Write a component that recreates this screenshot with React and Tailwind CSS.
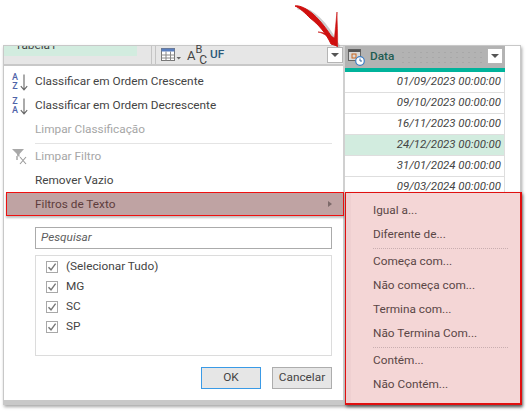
const Item = ({ icon, muted, children }) => (
  <div className={`flex h-[24px] items-center ${muted ? "text-[#a6a6a6]" : "text-[#444444]"}`}>
    <div className="flex w-[31px] shrink-0 items-center justify-center">{icon}</div>
    <span>{children}</span>
  </div>
);

const SortIcon = ({ top, bottom }) => (
  <div className="flex h-[20px] items-center gap-[1px]">
    <div className="flex w-[8px] flex-col items-center text-[9px] font-medium leading-[9px] text-[#4f63a8]">
      <span>{top}</span>
      <span>{bottom}</span>
    </div>
    <svg width="8" height="17" viewBox="0 0 8 17" fill="none" stroke="#666666" strokeWidth="1.1">
      <path d="M4 0.5V15.5M0.8 12.2L4 15.8L7.2 12.2" />
    </svg>
  </div>
);

const Funnel = () => (
  <svg width="18" height="18" viewBox="0 0 18 18" fill="none">
    <path d="M1 1H13L8.5 6V9L6 7.5V6Z" fill="#a8a8a8" />
    <path d="M6 8V12" stroke="#a8a8a8" strokeWidth="1.5" />
    <path d="M9 9L15 16M15 9L9 16" stroke="#9a9a9a" strokeWidth="1.1" />
  </svg>
);

const DropBtn = () => (
  <div className="flex h-[16px] w-[16px] items-center justify-center border border-[#b5b5b5] bg-white">
    <div className="h-0 w-0 border-x-[4px] border-t-[4px] border-x-transparent border-t-[#555555]" />
  </div>
);

const Check = ({ label }) => (
  <div className="flex h-[20px] items-center pl-[10px]">
    <div className="flex h-[12px] w-[12px] items-center justify-center border border-[#a8a8a8] bg-white">
      <svg width="10" height="10" viewBox="0 0 10 10" fill="none" stroke="#777777" strokeWidth="1.4">
        <path d="M1.5 5.2L4 7.8L8.6 1.6" />
      </svg>
    </div>
    <span className="ml-[8px] text-[#444444]">{label}</span>
  </div>
);

const rows = [
  ["01/09/2023 00:00:00", false],
  ["09/10/2023 00:00:00", false],
  ["16/11/2023 00:00:00", false],
  ["24/12/2023 00:00:00", true],
  ["31/01/2024 00:00:00", false],
  ["09/03/2024 00:00:00", false],
];

const Fly = ({ children }) => (
  <div className="flex h-[24px] items-center pl-[27px] text-[#5a4646]">{children}</div>
);
const FlySep = () => (
  <div className="my-[1px] ml-[27px] mr-[12px] border-t border-dotted border-[#c9aeb0]" />
);

export default function App() {
  return (
    <div className="relative h-[414px] w-[530px] overflow-hidden bg-white pl-[3px] pt-[45px] text-[11.8px] font-['Roboto',sans-serif]">
      <div className="relative flex h-[360px] w-[518px] border border-b-[5px] border-[#c8c8c8] bg-white shadow-[1px_2px_3px_rgba(0,0,0,0.35)]">
        <div className="flex w-[339px] shrink-0 flex-col">
          {/* column header */}
          <div className="flex h-[20px] border-b-2 border-[#c8c8c8] bg-[#e6e6e6]">
            <div className="h-[10px] w-[133px] overflow-hidden bg-[#d2ecdf] pl-[11px]">
              <div className="-mt-[10px] leading-[18px] text-[#444444]">Tabela1</div>
            </div>
            <div className="w-[15px] border-r border-[#c4c4c4]" />
            <div className="w-[4px] border-r border-[#c4c4c4]" />
            <div className="flex flex-1 items-center pl-[5px]">
              <svg width="22" height="16" viewBox="0 0 22 16" fill="none">
                <rect x="0.5" y="1.5" width="13" height="12" fill="#fff" stroke="#777" />
                <rect x="0.5" y="1.5" width="13" height="3" fill="#5a7fc0" />
                <path d="M0.5 8H13.5M0.5 11H13.5M5 4.5V13.5M9.5 4.5V13.5" stroke="#888" />
                <path d="M15.5 10H20L17.75 12.5Z" fill="#666" />
              </svg>
              <div className="ml-[4px] flex h-[18px] w-[18px] shrink-0 text-[#444444]">
                <span className="mt-[4px] text-[13px] leading-[12px]">A</span>
                <span className="-mt-[1px] text-[11px] leading-[9px]">B</span>
                <span className="-ml-[3px] mt-[9px] text-[12px] leading-[10px]">C</span>
              </div>
              <span className="ml-[5px] font-medium text-[#2a5a7a]">UF</span>
              <div className="ml-auto pb-[1px]"><DropBtn /></div>
            </div>
          </div>

          {/* menu */}
          <div className="flex flex-1 flex-col pt-[4px]">
            <Item icon={<SortIcon top="A" bottom="Z" />}>Classificar em Ordem Crescente</Item>
            <Item icon={<SortIcon top="Z" bottom="A" />}>Classificar em Ordem Decrescente</Item>
            <Item muted>Limpar Classificação</Item>
            <div className="my-[1px] ml-[31px] mr-[11px] border-t border-[#e4e4e4]" />
            <Item muted icon={<Funnel />}>Limpar Filtro</Item>
            <Item>Remover Vazio</Item>
            <div className="relative">
              <div className="absolute -top-[1px] left-[2px] h-[24px] w-[338px] border border-[#ee1111] bg-[#bfa3a3] shadow-[0_2px_2px_rgba(0,0,0,0.25)]" />
              <div className="absolute left-[324px] top-[8px] h-0 w-0 border-y-[3.5px] border-l-[4px] border-y-transparent border-l-[#7d6a6a]" />
              <div className="relative flex h-[24px] items-center pl-[31px] text-[#5e3d3d]">Filtros de Texto</div>
            </div>
            <div className="ml-[31px] mr-[11px] mt-[10px] flex h-[22px] items-center border border-[#ababab] pl-[5px] italic text-[#5e5e5e]">
              Pesquisar
            </div>
            <div className="ml-[31px] mr-[11px] mt-[6px] h-[101px] border border-[#dcdcdc] pt-[1px]">
              <Check label="(Selecionar Tudo)" />
              <Check label="MG" />
              <Check label="SC" />
              <Check label="SP" />
            </div>
            <div className="mr-[11px] mt-[11px] flex justify-end gap-[11px]">
              <div className="flex h-[22px] w-[60px] items-center justify-center border border-[#3a9ae6] bg-[#e6e6e6] text-[#444444]">OK</div>
              <div className="flex h-[22px] w-[60px] items-center justify-center border border-[#adadad] bg-[#e6e6e6] text-[#444444]">Cancelar</div>
            </div>
          </div>
        </div>

        {/* Data column */}
        <div className="flex w-[162px] shrink-0 flex-col border-l-2 border-[#d0d0d0]">
          <div className="flex h-[22px] items-center bg-[#b3b3b3] pl-[3px]">
            <svg width="17" height="19" viewBox="0 0 17 19" fill="none">
              <rect x="0.5" y="1.5" width="12" height="11" fill="#d8d8d8" stroke="#666" />
              <rect x="0.5" y="1.5" width="12" height="2.5" fill="#555" />
              <rect x="4" y="6" width="4" height="4" fill="none" stroke="#c8641e" />
              <circle cx="12" cy="13" r="4.3" fill="#fff" stroke="#3f7fc4" strokeWidth="1.2" />
              <path d="M12 10.5V13H14" stroke="#35689f" />
            </svg>
            <span className="ml-[5px] font-medium text-[#1f5c52]">Data</span>
            <div className="ml-[6px] mr-[2px] h-[14px] flex-1 bg-[radial-gradient(#a8a8a8_0.5px,transparent_0.6px)] bg-[length:6px_5px]" />
            <div className="mb-[3px] mr-[2px]"><DropBtn /></div>
          </div>
          <div className="h-[4px] bg-[#00b39b]" />
          {rows.map(([t, g]) => (
            <div
              key={t}
              className={`flex h-[21px] shrink-0 items-center justify-end border-b border-r border-[#dedede] pr-[3px] text-[11.4px] italic text-[#444444] ${g ? "bg-[#d2ecdf]" : "bg-white"}`}
            >
              {t}
            </div>
          ))}
        </div>
        <div className="flex-1 bg-white" />

        {/* flyout submenu */}
        <div className="absolute left-[341px] top-[146px] h-[213px] w-[177px] border border-r-2 border-b-2 border-[#e01010] bg-[#f4d6d6] pt-[6px] shadow-[1px_2px_3px_rgba(0,0,0,0.5),inset_5px_0_0_#efd0d1]">
          <Fly>Igual a...</Fly>
          <Fly>Diferente de...</Fly>
          <FlySep />
          <Fly>Começa com...</Fly>
          <Fly>Não começa com...</Fly>
          <Fly>Termina com...</Fly>
          <Fly>Não Termina Com...</Fly>
          <FlySep />
          <Fly>Contém...</Fly>
          <Fly>Não Contém...</Fly>
        </div>
      </div>

      {/* red annotation arrow */}
      <svg className="absolute left-[290px] top-0" width="60" height="52" viewBox="0 0 60 52" fill="none">
        <path d="M6 7C22 8 36 24 47.5 46" stroke="#999" strokeWidth="3" opacity="0.5" transform="translate(1.5 1)" />
        <path d="M5 6C10 5 17 9 23 14C31 21 40 33 47 46L41 44C36 33 28 24 20 18C15 13 10 8 5 6Z" fill="#d0100f" stroke="#d0100f" />
        <path d="M28 32C34 33 41 38 47.5 47C48 35 47 22 47 12C46 22 45 32 44.5 38C40 35 33 32 28 32Z" fill="#d0100f" stroke="#c81010" strokeWidth="0.6" />
      </svg>
    </div>
  );
}
